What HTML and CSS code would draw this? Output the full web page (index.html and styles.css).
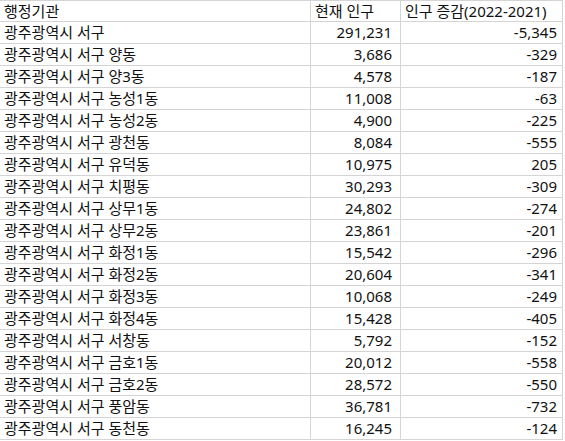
FILE: index.html
```html
<!DOCTYPE html>
<html lang="ko">
<head>
<meta charset="utf-8">
<link rel="stylesheet" href="styles.css">
</head>
<body>
<div class="sheet">
  <div class="cell head">행정기관</div><div class="cell head">현재 인구</div><div class="cell head">인구 증감(2022-2021)</div>
  <div class="cell">광주광역시 서구</div><div class="cell num">291,231</div><div class="cell num2">-5,345</div>
  <div class="cell">광주광역시 서구 양동</div><div class="cell num">3,686</div><div class="cell num2">-329</div>
  <div class="cell">광주광역시 서구 양3동</div><div class="cell num">4,578</div><div class="cell num2">-187</div>
  <div class="cell">광주광역시 서구 농성1동</div><div class="cell num">11,008</div><div class="cell num2">-63</div>
  <div class="cell">광주광역시 서구 농성2동</div><div class="cell num">4,900</div><div class="cell num2">-225</div>
  <div class="cell">광주광역시 서구 광천동</div><div class="cell num">8,084</div><div class="cell num2">-555</div>
  <div class="cell">광주광역시 서구 유덕동</div><div class="cell num">10,975</div><div class="cell num2">205</div>
  <div class="cell">광주광역시 서구 치평동</div><div class="cell num">30,293</div><div class="cell num2">-309</div>
  <div class="cell">광주광역시 서구 상무1동</div><div class="cell num">24,802</div><div class="cell num2">-274</div>
  <div class="cell">광주광역시 서구 상무2동</div><div class="cell num">23,861</div><div class="cell num2">-201</div>
  <div class="cell">광주광역시 서구 화정1동</div><div class="cell num">15,542</div><div class="cell num2">-296</div>
  <div class="cell">광주광역시 서구 화정2동</div><div class="cell num">20,604</div><div class="cell num2">-341</div>
  <div class="cell">광주광역시 서구 화정3동</div><div class="cell num">10,068</div><div class="cell num2">-249</div>
  <div class="cell">광주광역시 서구 화정4동</div><div class="cell num">15,428</div><div class="cell num2">-405</div>
  <div class="cell">광주광역시 서구 서창동</div><div class="cell num">5,792</div><div class="cell num2">-152</div>
  <div class="cell">광주광역시 서구 금호1동</div><div class="cell num">20,012</div><div class="cell num2">-558</div>
  <div class="cell">광주광역시 서구 금호2동</div><div class="cell num">28,572</div><div class="cell num2">-550</div>
  <div class="cell">광주광역시 서구 풍암동</div><div class="cell num">36,781</div><div class="cell num2">-732</div>
  <div class="cell">광주광역시 서구 동천동</div><div class="cell num">16,245</div><div class="cell num2">-124</div>
</div>
</body>
</html>
```
FILE: styles.css
```css
html, body {
  margin: 0;
  padding: 0;
  background: #ffffff;
}
.sheet {
  display: grid;
  grid-template-columns: 311px 90px 162px;
  grid-auto-rows: 22px;
  font-family: "Noto Sans", "Noto Sans CJK KR", sans-serif;
  font-size: 15px;
  color: #111111;
}
.cell {
  box-sizing: border-box;
  border-right: 1px solid #d4d4d4;
  border-bottom: 1px solid #d4d4d4;
  padding: 0 3px 0 4px;
  display: flex;
  align-items: center;
  white-space: nowrap;
  overflow: hidden;
  line-height: 1;
}
.head {
  border-top: 1px solid #d4d4d4;
}
.num {
  justify-content: flex-end;
  padding-right: 8px;
}
.num2 {
  justify-content: flex-end;
  padding-right: 5px;
}
```
